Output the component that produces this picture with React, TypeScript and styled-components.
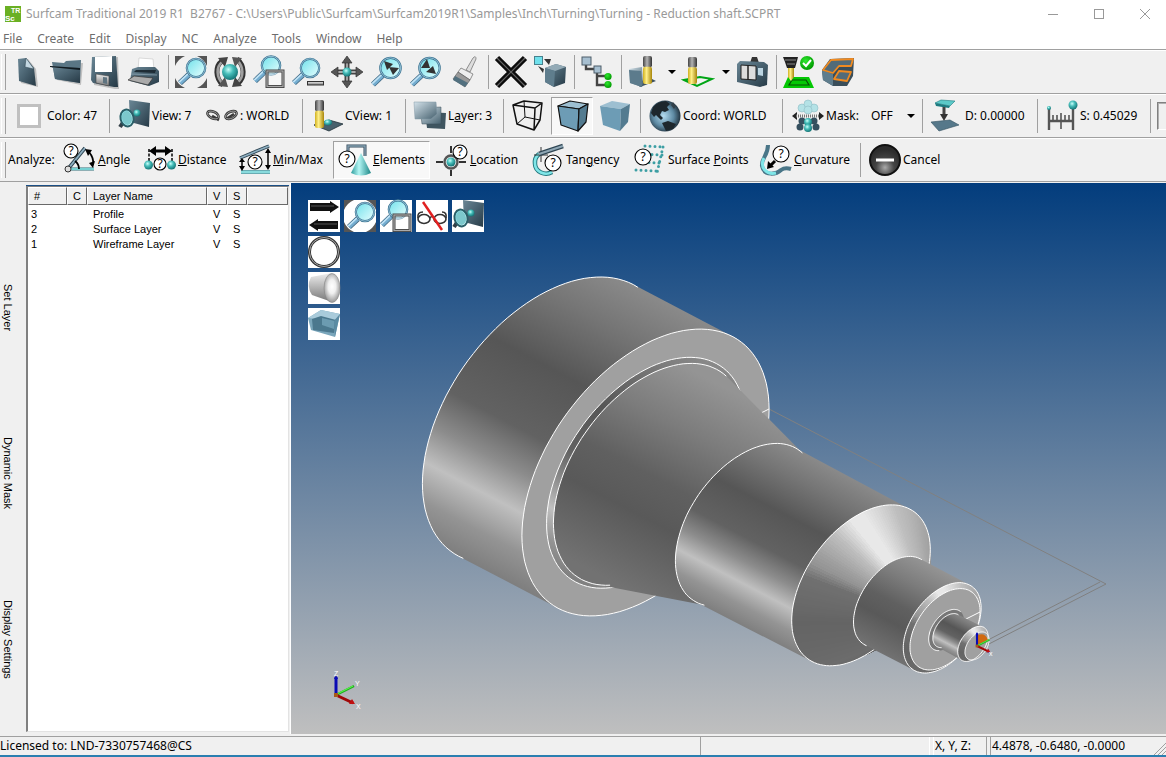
import React from "react";
import styled, { createGlobalStyle, css } from "styled-components";

const GlobalStyle = createGlobalStyle`
  * { box-sizing: border-box; }
  body { margin: 0; background: #f0f0f0; }
  button, select, input { font: inherit; color: inherit; }
`;

const Shell = styled.div`
  display: flex;
  flex-direction: column;
  min-height: 100vh;
  background: #f0f0f0;
  border-bottom: 2px solid #2a7fb0;
  font-family: "Noto Sans", sans-serif;
  font-size: 12px;
  line-height: 16px;
  color: #000;
`;

const TitleBar = styled.header`
  display: flex;
  align-items: center;
  height: 28px;
  padding-left: 5px;
  background: #fff;
`;

const Title = styled.h1`
  flex: 1;
  margin: 0 0 0 5px;
  font-size: 12px;
  font-weight: 400;
  color: #999;
  white-space: pre;
`;

const CaptionButton = styled.button`
  display: flex;
  align-items: center;
  justify-content: center;
  width: 46px;
  height: 28px;
  padding: 0 0 0 4px;
  border: 0;
  background: transparent;
`;

const MenuBar = styled.nav`
  display: flex;
  height: 21px;
  padding-left: 3px;
  gap: 15px;
  background: #fff;
`;

const MenuItem = styled.button`
  padding: 0;
  border: 0;
  background: transparent;
  color: #6d6d6d;
`;

const Toolbar = styled.div`
  display: flex;
  align-items: center;
  height: 44px;
  padding-left: 8px;
  border-top: 1px solid #a0a0a0;
  box-shadow: inset 0 1px 0 #fff;
  position: relative;
  overflow: hidden;
  &::before {
    content: "";
    position: absolute;
    left: 1px;
    top: 4px;
    width: 3px;
    height: 36px;
    border-right: 1px solid #a0a0a0;
    border-left: 1px solid #fff;
  }
`;

const Separator = styled.span<{ $wide?: boolean }>`
  flex: none;
  width: ${(p) => (p.$wide ? 8 : 6)}px;
  height: 34px;
  background: linear-gradient(#a0a0a0, #a0a0a0) center / 1px 100% no-repeat;
`;

const ToolButton = styled.button<{ $w?: number; $pressed?: boolean }>`
  flex: none;
  display: flex;
  align-items: center;
  gap: 2px;
  width: ${(p) => p.$w ?? 39}px;
  height: 38px;
  padding: 0 0 0 ${(p) => (p.$w ? 5 : 2)}px;
  border: 1px solid transparent;
  background: transparent;
  white-space: nowrap;
  ${(p) =>
    p.$pressed &&
    css`
      border-color: #a0a0a0 #fff #fff #a0a0a0;
      background: #f8f8f8;
    `}
`;

const Caret = styled.button`
  flex: none;
  width: 15px;
  height: 34px;
  padding: 0;
  border: 0;
  background: transparent;
  &::after {
    content: "";
    display: block;
    margin: 0 auto;
    width: 0;
    border: 4px solid transparent;
    border-top-color: #000;
    border-bottom: 0;
  }
`;

const Swatch = styled.span`
  width: 24px;
  height: 24px;
  margin: 0 4px 0 3px;
  border: 3px solid #c0c0c0;
  background: #fff;
`;

const MaskLabel = styled.label`
  flex: none;
  display: flex;
  align-items: center;
  gap: 2px;
  width: 84px;
  padding-left: 7px;
`;

const MaskSelect = styled.select`
  flex: none;
  width: 50px;
  height: 24px;
  padding: 0 0 0 2px;
  border: 0;
  appearance: none;
  background: transparent;
`;

const MaskGroup = styled.div`
  position: relative;
  display: flex;
  align-items: center;
  width: 134px;
  &::after {
    content: "";
    position: absolute;
    right: 4px;
    top: 14px;
    border: 4px solid transparent;
    border-top-color: #000;
    border-bottom: 0;
    pointer-events: none;
  }
`;

const Well = styled.span`
  flex: 1;
  align-self: center;
  height: 28px;
  margin-left: 4px;
  border: 1px solid #808080;
  border-right: 0;
  border-bottom-color: #fff;
  box-shadow: inset 1px 1px 0 #b0b0b0;
`;

const ToolbarCaption = styled.span`
  flex: none;
  width: 50px;
`;

const Main = styled.main`
  flex: 1;
  display: flex;
  min-height: 553px;
  padding-top: 1px;
  border-top: 1px solid #a0a0a0;
`;

const SidePanel = styled.aside`
  flex: none;
  display: flex;
  width: 291px;
  padding: 3px 1px 2px 0;
  border-right: 1px solid #fff;
`;

const TabStrip = styled.div`
  flex: none;
  display: flex;
  flex-direction: column;
  align-items: flex-start;
  width: 26px;
  padding: 39px 0 10px;
`;

const SideTab = styled.button`
  flex: 1;
  padding: 0;
  border: 0;
  background: transparent;
  writing-mode: vertical-rl;
  text-align: center;
  font: 11px/16px "Liberation Sans", sans-serif;
`;

const ListBox = styled.div`
  flex: 1;
  border: 1px solid #808080;
  border-left-width: 2px;
  border-right-color: #e3e3e3;
  border-bottom-color: #e3e3e3;
  box-shadow: 0 -1px 0 #1b4f86;
  background: #fff;
`;

const LayerTable = styled.table`
  width: 100%;
  table-layout: fixed;
  border-collapse: separate;
  border-spacing: 0;
  font: 11px/15px "Liberation Sans", sans-serif;
  th {
    height: 18px;
    padding: 0 5px;
    border: 1px solid;
    border-color: #fff #696969 #696969 #fff;
    background: #f0f0f0;
    font-weight: 400;
    text-align: left;
    line-height: 14px;
  }
  td {
    padding: 0 3px;
    height: 15px;
  }
  td:nth-child(3) { padding-left: 6px; }
  tbody tr:first-child td { padding-top: 2px; height: 17px; }
  td:nth-child(4), td:nth-child(5) { padding-left: 6px; }
`;

const Viewport = styled.section`
  position: relative;
  flex: 1;
  min-width: 0;
  overflow: hidden;
  background: linear-gradient(#033d7d, #bfbfbf);
`;

const Scene = styled.svg`
  display: block;
  width: 100%;
  height: 100%;
`;

const Overlay = styled.div`
  position: absolute;
  left: 17px;
  top: 17px;
  display: grid;
  grid-template-columns: repeat(5, 32px);
  grid-auto-rows: 32px;
  gap: 4px;
`;

const OverlayButton = styled.button<{ $first?: boolean }>`
  ${(p) => p.$first && "grid-column: 1;"}
  width: 32px;
  height: 32px;
  padding: 0;
  border: 0;
  background: #fff;
`;

const StatusBar = styled.footer`
  display: flex;
  height: 19px;
  margin-top: 2px;
  border-top: 1px solid #a0a0a0;
  line-height: 18px;
`;

const StatusCell = styled.span<{ $w?: number; $raised?: boolean }>`
  flex: ${(p) => (p.$w ? `0 0 ${p.$w}px` : "1")};
  padding-left: 1px;
  margin-right: 3px;
  border-right: 1px solid ${(p) => (p.$raised ? "#a0a0a0" : "#fff")};
  border-left: 1px solid ${(p) => (p.$raised ? "#fff" : "#a0a0a0")};
  &:first-child { padding-left: 0; margin-right: 0; border: 0; }
  &:last-child { margin-right: 0; border-right: 0; }
`;

const Coordinates = styled(StatusCell)`
  display: flex;
  justify-content: space-between;
`;

const Glyph = styled.svg`
  flex: none;
  display: block;
  width: 32px;
  height: 32px;
  overflow: visible;
`;

const SharedDefs = styled.svg`
  position: absolute;
  width: 0;
  height: 0;
`;

/* ---------- icons ---------- */

const Defs = () => (
  <SharedDefs aria-hidden="true">
    <defs>
      <linearGradient id="slate" x1="0" y1="0" x2="1" y2="1">
        <stop offset="0" stopColor="#6b8796" />
        <stop offset=".5" stopColor="#48616f" />
        <stop offset="1" stopColor="#263945" />
      </linearGradient>
      <linearGradient id="steel" x1="0" y1="0" x2="1" y2="1">
        <stop offset="0" stopColor="#d4e2ea" />
        <stop offset="1" stopColor="#45606e" />
      </linearGradient>
      <linearGradient id="lens" x1="0" y1="0" x2="1" y2="1">
        <stop offset="0" stopColor="#6fe0ea" />
        <stop offset="1" stopColor="#e8ffff" />
      </linearGradient>
      <linearGradient id="metal" x1="0" y1="0" x2="1" y2="0">
        <stop offset="0" stopColor="#444" />
        <stop offset=".45" stopColor="#b4b4b4" />
        <stop offset="1" stopColor="#333" />
      </linearGradient>
      <linearGradient id="brass" x1="0" y1="0" x2="1" y2="0">
        <stop offset="0" stopColor="#d0b020" />
        <stop offset=".4" stopColor="#fff08a" />
        <stop offset="1" stopColor="#a8860a" />
      </linearGradient>
      <linearGradient id="chrome" x1="0" y1="0" x2="0" y2="1">
        <stop offset="0" stopColor="#eee" />
        <stop offset="1" stopColor="#777" />
      </linearGradient>
      <linearGradient id="cone" x1="0" y1="0" x2="1" y2="0">
        <stop offset="0" stopColor="#2e9c9c" />
        <stop offset=".4" stopColor="#b4f6f4" />
        <stop offset="1" stopColor="#1b8686" />
      </linearGradient>
      <radialGradient id="teal" cx=".4" cy=".35" r=".65">
        <stop offset="0" stopColor="#c8fffa" />
        <stop offset=".45" stopColor="#46bdb9" />
        <stop offset="1" stopColor="#157577" />
      </radialGradient>
      <radialGradient id="green" cx=".4" cy=".35" r=".65">
        <stop offset="0" stopColor="#2fe82f" />
        <stop offset="1" stopColor="#009a00" />
      </radialGradient>
      <radialGradient id="globe" cx=".45" cy=".5" r=".55">
        <stop offset="0" stopColor="#b4dcf0" />
        <stop offset=".6" stopColor="#5f8ba4" />
        <stop offset="1" stopColor="#22333f" />
      </radialGradient>
      <radialGradient id="knob" cx=".5" cy=".75" r=".6">
        <stop offset="0" stopColor="#aaa" />
        <stop offset=".5" stopColor="#444" />
        <stop offset="1" stopColor="#2c2c2c" />
      </radialGradient>
      <radialGradient id="disc" cx=".5" cy=".45" r=".6">
        <stop offset="0" stopColor="#fff" />
        <stop offset=".4" stopColor="#f0f0f0" />
        <stop offset="1" stopColor="#888" />
      </radialGradient>
    </defs>
  </SharedDefs>
);

const Icon = ({ children }: { children: React.ReactNode }) => (
  <Glyph viewBox="0 0 32 32" aria-hidden="true">
    {children}
  </Glyph>
);

const Lens = ({ x, y, r, hx, hy }: { x: number; y: number; r: number; hx: number; hy: number }) => {
  const k = r / Math.hypot(hx - x, hy - y);
  const sx = x + (hx - x) * k;
  const sy = y + (hy - y) * k;
  return (
    <>
      <path d={`M${sx} ${sy}L${hx} ${hy}`} stroke="#3d647d" strokeWidth="5.6" />
      <path d={`M${sx} ${sy}L${hx} ${hy}`} stroke="#74add0" strokeWidth="4.2" />
      <path d={`M${sx - 0.8} ${sy - 0.8}L${hx - 0.8} ${hy - 0.8}`} stroke="#c2e4f6" strokeWidth="1.6" />
      <circle cx={x} cy={y} r={r - 0.8} fill="url(#lens)" stroke="#38708e" strokeWidth="2.2" />
      <circle cx={x} cy={y} r={r - 0.8} fill="none" stroke="#9cc9df" strokeWidth=".9" />
    </>
  );
};

const Help = ({ x, y, r = 7 }: { x: number; y: number; r?: number }) => (
  <>
    <circle cx={x} cy={y} r={r} fill="#fff" stroke="#000" strokeWidth="1.1" />
    <text x={x} y={y + 4.2} textAnchor="middle" fontSize="12" fontFamily="Noto Sans, sans-serif">
      ?
    </text>
  </>
);

const NewIcon = () => (
  <Icon>
    <path d="M9 4L17 3 25 13 27 31 10 27Z" fill="#0003" />
    <path d="M7 3L15 2 23 12 25 30 8 25Z" fill="url(#slate)" />
    <path d="M15 2L23 13 14 11Z" fill="#c5d8e2" stroke="#2d424e" strokeWidth=".5" />
  </Icon>
);
const OpenIcon = () => (
  <Icon>
    <path d="M6 8L33 7 31 29 7 24Z" fill="#0003" />
    <path d="M2 6L14 7 16 5 31 4 30 27 5 23Z" fill="#5a7685" />
    <path d="M0 10L30 12 30 27 5 23 3 12Z" fill="url(#slate)" />
    <path d="M0 10L30 12 30 14 0 11Z" fill="#111b21" />
  </Icon>
);
const SaveIcon = () => (
  <Icon>
    <path d="M5 2L29 1 30 33 26 33 5 29Z" fill="#0003" />
    <path d="M3 1L27 0 29 31 25 31 4 27 2 24Z" fill="url(#slate)" />
    <path d="M6 1L23 0 23 16 6 16Z" fill="#fff" />
    <path d="M7 18L20 20 20 30 7 27Z" fill="url(#chrome)" stroke="#444" strokeWidth=".6" />
    <path d="M14 21L18 21.500 18 28 14 27Z" fill="#5f7480" />
  </Icon>
);
const PrintIcon = () => (
  <Icon>
    <path d="M11 2L25 3 26 14 10 14Z" fill="#fff" stroke="#bbb" strokeWidth=".5" />
    <path d="M4 13L10 11 27 11 31 15 31 26 21 30 2 25Z" fill="url(#slate)" />
    <path d="M8 14L28 14 27 17 6 16Z" fill="#1e2c35" />
    <path d="M0 24L6 20 25 22 20 29Z" fill="#aaa" stroke="#333" strokeWidth=".7" />
    <path d="M3 18L29 19" stroke="#8aa2b0" strokeWidth=".8" />
  </Icon>
);
const FitIcon = () => (
  <Icon>
    <path d="M0 0H10Q3 3 0 10ZM32 0H22Q29 3 32 10ZM0 32V22Q3 29 10 32ZM32 32H22Q29 29 32 22Z" fill="#555" />
    <Lens x={21} y={12} r={10} hx={5} hy={27} />
  </Icon>
);
const RotateIcon = () => (
  <Icon>
    <g fill="none" stroke="#333" strokeWidth="5">
      <path d="M9 29C1 22 1 10 8 5" />
      <path d="M23 3C31 10 31 22 24 27" />
    </g>
    <g fill="none" stroke="#a0a0a0" strokeWidth="2.600">
      <path d="M9 28C2 21 2 11 8 6" />
      <path d="M23 4C30 11 30 21 24 26" />
    </g>
    <path d="M4 2L14 1 11 11ZM28 30L18 31 21 21Z" fill="#444" />
    <path d="M28 2L18 1 21 11ZM4 30L14 31 11 21Z" fill="#555" />
    <circle cx="16" cy="16" r="8" fill="url(#teal)" />
  </Icon>
);
const ZoomWindowIcon = () => (
  <Icon>
    <Lens x={18} y={9.500} r={10} hx={2} hy={25} />
    <rect x="14" y="15" width="16" height="15.500" fill="#fff6" stroke="#444" strokeWidth="3" />
    <rect x="14" y="15" width="16" height="15.500" fill="none" stroke="#aaa" strokeWidth="1.200" />
  </Icon>
);
const ZoomOutIcon = () => (
  <Icon>
    <Lens x={18} y={12} r={10} hx={2} hy={27} />
    <rect x="15.500" y="25.500" width="16" height="3.500" fill="url(#chrome)" stroke="#333" />
  </Icon>
);
const PanIcon = () => (
  <Icon>
    <path d="M16 3V29M3 16H29" stroke="#444" strokeWidth="5" />
    <path d="M16 3V29M3 16H29" stroke="#aaa" strokeWidth="1.800" />
    <path d="M16 0L21 7H11ZM16 32L21 25H11ZM0 16L7 11V21ZM32 16L25 11V21Z" fill="#555" stroke="#333" strokeWidth=".7" />
    <circle cx="16" cy="16" r="4.500" fill="url(#teal)" />
  </Icon>
);
const PrevIcon = () => (
  <Icon>
    <Lens x={20.500} y={12} r={11} hx={3} hy={28.500} />
    <path d="M14 5L23 8 17 14ZM19 11L29 12 23 19Z" fill="#333" />
  </Icon>
);
const NextIcon = () => (
  <Icon>
    <Lens x={20.500} y={12} r={11} hx={3} hy={28.500} />
    <path d="M18 3L21 12 12 12ZM24 10L27 18 17 16Z" fill="#333" />
  </Icon>
);
const BrushIcon = () => (
  <Icon>
    <path d="M25 2Q28-1 28 3L22 16 18 14Z" fill="#ddd" stroke="#777" strokeWidth=".8" />
    <path d="M13 12L25 18 22 24 10 16Z" fill="#eee" stroke="#777" strokeWidth=".8" />
    <path d="M10 16L22 24 17 31 5 23Z" fill="#9a9a9a" stroke="#555" strokeWidth=".6" />
    <path d="M7 20L20 27 17 31 5 24Z" fill="#52707f" />
  </Icon>
);
const DeleteIcon = () => (
  <Icon>
    <path d="M2 2L30 30M30 2L2 30" stroke="#0c0c0c" strokeWidth="6" />
    <path d="M2 2L30 30M30 2L2 30" stroke="#666" strokeWidth="1.200" />
  </Icon>
);
const TransformIcon = () => (
  <Icon>
    <path d="M11 12L22 8 32 11 31 27 20 31 11 26Z" fill="url(#slate)" />
    <path d="M11 12L22 8 32 11 21 15Z" fill="#93aab6" />
    <path d="M11 12L21 15 20 31 11 26Z" fill="#5f7d8d" />
    <rect x=".5" y=".5" width="8" height="8" fill="#6fe0ec" stroke="#47818d" />
    <path d="M10 3L17 3 15 9ZM4 10L10 13 9 17Z" fill="#333" />
  </Icon>
);
const TreeIcon = () => (
  <Icon>
    <path d="M5 8V13H14M16 16V29H26M16 20H26" fill="none" stroke="#444" strokeWidth="2.400" />
    <rect x="1" y="1" width="9" height="8" fill="#a7bfd0" stroke="#4c5d69" />
    <rect x="13" y="10" width="7" height="7" fill="#a7bfd0" stroke="#4c5d69" />
    <circle cx="27" cy="20.500" r="3.600" fill="url(#green)" />
    <circle cx="27" cy="28.500" r="3.600" fill="url(#green)" />
  </Icon>
);
const Tool = ({ x, top = 0, h = 28 }: { x: number; top?: number; h?: number }) => (
  <>
    <rect x={x} y={top} width="9" height={h * 0.4} rx="2" fill="url(#metal)" />
    <rect x={x} y={top + h * 0.38} width="9" height={h * 0.62} rx="2" fill="url(#brass)" />
  </>
);
const MillIcon = () => (
  <Icon>
    <path d="M12 31L28 25 22 22 8 27Z" fill="#3d515e" />
    <path d="M1 13L14 11 15 28 14 31 2 27Z" fill="url(#steel)" />
    <path d="M1 14L13 15 14 31 2 27Z" fill="#5c7b8c" />
    <Tool x={15} />
  </Icon>
);
const PathIcon = () => (
  <Icon>
    <path d="M2 24L15 30 30 23 18 21Z" fill="#f4f4f4" stroke="#00a515" strokeWidth="2" />
    <Tool x={6} top={1} h={27} />
  </Icon>
);
const MachineIcon = () => (
  <Icon>
    <path d="M16 1h5l2 6h-9z" fill="#333" />
    <path d="M1 8L4 5 28 6 32 9 31 29 24 31 1 26Z" fill="url(#slate)" />
    <path d="M5 9L20 10 20 24 5 23Z" fill="#ddd" stroke="#222" />
    <path d="M12 9V24" stroke="#222" strokeWidth="1.500" />
    <path d="M22 12L27 12 27 20 22 19Z" fill="#bcd5e2" />
  </Icon>
);
const VerifyIcon = () => (
  <Icon>
    <path d="M0 1H15L14 5 12 12H4L2 6Z" fill="#222" />
    <path d="M2 4H13M4 8H12" stroke="#888" />
    <path d="M5 21H26L31 32H0Z" fill="#04c804" />
    <path d="M9 24H23L26 29H6Z" fill="none" stroke="#064f06" strokeWidth="1.200" />
    <path d="M5 12H11V21L8 25 5 21Z" fill="url(#brass)" />
    <circle cx="24" cy="7" r="7" fill="url(#green)" />
    <path d="M20 7L23 10 28 4" fill="none" stroke="#fff" strokeWidth="2" />
  </Icon>
);
const StockIcon = () => (
  <Icon>
    <path d="M0 14L8 3 32 2 31 20 25 30 11 30 1 24Z" fill="#3a4e5a" />
    <path d="M0 14L11 18 11 30 1 24Z" fill="#5f7d8d" />
    <path d="M1 14L9 4 31 3 29 10 17 10 11 17Z" fill="#526b79" stroke="#f08a20" strokeWidth="1.800" strokeLinejoin="round" />
    <path d="M12 23L17 15 29 16 25 25Z" fill="#526b79" stroke="#f08a20" strokeWidth="1.800" strokeLinejoin="round" />
  </Icon>
);
const ViewIcon = () => (
  <Icon>
    <path d="M11 0L32 3 31 27 12 22Z" fill="url(#slate)" />
    <circle cx="19" cy="13" r="3.500" fill="url(#teal)" />
    <path d="M6 21L2 27" stroke="#333f47" strokeWidth="4" />
    <ellipse cx="9" cy="18" rx="6.500" ry="8.500" transform="rotate(-12 9 18)" fill="url(#lens)" stroke="#2a5f68" strokeWidth="2" />
    <ellipse cx="9" cy="18" rx="5" ry="7" transform="rotate(-12 9 18)" fill="#7cc8cc" />
  </Icon>
);
const LinkIcon = () => (
  <Icon>
    <g fill="none" stroke="#3a3a3a" strokeWidth="2.600">
      <ellipse cx="7" cy="15" rx="6" ry="3.300" transform="rotate(25 7 15)" />
      <ellipse cx="25" cy="15" rx="6" ry="3.300" transform="rotate(-25 25 15)" />
      <path d="M6 16L13 20M20 19L28 14" />
    </g>
    <g fill="none" stroke="#aaa" strokeWidth=".8">
      <ellipse cx="7" cy="15" rx="6" ry="3.300" transform="rotate(25 7 15)" />
      <ellipse cx="25" cy="15" rx="6" ry="3.300" transform="rotate(-25 25 15)" />
    </g>
  </Icon>
);
const CViewIcon = () => (
  <Icon>
    <path d="M3 25L18 20 32 24 18 31Z" fill="#48606c" stroke="#22313a" strokeWidth=".8" />
    <ellipse cx="17" cy="22.500" rx="4" ry="3" fill="url(#teal)" />
    <Tool x={4} h={28} />
  </Icon>
);
const LayerIcon = () => (
  <Icon>
    <path d="M11 12L32 13 31 29 13 28Z" fill="#3f5560" />
    <path d="M6 8L27 7 27 24 8 24Z" fill="url(#steel)" stroke="#3b4e59" strokeWidth=".5" />
    <path d="M0 2L22 2 23 14 17 19 1 19Z" fill="url(#steel)" stroke="#8399a6" strokeWidth=".5" />
  </Icon>
);
const WireCubeIcon = () => (
  <Icon>
    <g fill="none" stroke="#111" strokeWidth="1.500" strokeLinejoin="round">
      <path d="M1 5L12 1 30 3 23 8ZM1 5L5 24 22 30 28 20 30 3M23 8L22 30" />
      <path d="M12 1L13 17 28 20M13 17L5 24" strokeWidth="1" />
    </g>
  </Icon>
);
const Cube = ({ edge }: { edge?: string }) => (
  <Icon>
    <g stroke={edge ?? "none"} strokeWidth="1.200" strokeLinejoin="round">
      <path d="M1 6L13 1 31 4 22 9Z" fill="#9dbfd1" />
      <path d="M1 6L22 9 21 31 4 25Z" fill="#6d9cb5" />
      <path d="M22 9L31 4 29 22 21 31Z" fill="#537b90" />
    </g>
  </Icon>
);
const GlobeIcon = () => (
  <Icon>
    <circle cx="16" cy="16" r="15.500" fill="url(#globe)" />
    <path d="M4 7Q9 1 17 1L21 4 18 7 20 10 16 12 13 11 11 15 14 18 12 20 7 15 5 17 2 13Z" fill="#1d272d" />
    <path d="M13 23L19 21 27 24 24 29 17 31 15 27Z" fill="#1d272d" />
    <path d="M24 2L27 6 25 9 22 5Z" fill="#324049" />
  </Icon>
);
const MaskIcon = () => (
  <Icon>
    <g fill="#b4e2e6" stroke="#8fbcc4" strokeWidth=".6">
      <circle cx="10" cy="8" r="4" />
      <circle cx="22" cy="8" r="4" />
      <circle cx="16" cy="4" r="4" />
      <circle cx="16" cy="10" r="4" />
    </g>
    <path d="M0 16L5 12V20ZM32 16L27 12V20Z" fill="#222" />
    <path d="M4 16H28" stroke="#777" strokeDasharray="1 1" strokeWidth="3" />
    <g fill="#35505f">
      <circle cx="10" cy="21" r="3.500" />
      <circle cx="22" cy="21" r="3.500" />
      <circle cx="8" cy="27" r="3.500" />
      <circle cx="24" cy="27" r="3.500" />
    </g>
    <circle cx="16" cy="22" r="4" fill="url(#teal)" />
    <circle cx="16" cy="28" r="4" fill="url(#teal)" />
  </Icon>
);
const DepthIcon = () => (
  <Icon>
    <path d="M4 3L10 0 24 1 19 6Z" fill="#5cc9c8" stroke="#1d7b80" strokeWidth=".6" />
    <path d="M4 3L19 6 18 8 5 6Z" fill="#1d7b80" />
    <path d="M13 7V15" stroke="#444" strokeWidth="3" />
    <path d="M9 14H17L13 21Z" fill="#333" />
    <path d="M0 22L19 20 28 25 8 31Z" fill="#56788a" stroke="#33505f" strokeWidth=".6" />
  </Icon>
);
const ScaleIcon = () => (
  <Icon>
    <path d="M3 8V30M27 8V30M3 21H27" stroke="#555" strokeWidth="2.400" />
    <path d="M7 15V21M11 15V21M19 15V21M23 15V21M15 13V29" stroke="#555" strokeWidth="1.600" />
    <circle cx="3" cy="8" r="2" fill="url(#teal)" />
    <circle cx="27" cy="5" r="4.500" fill="url(#teal)" />
  </Icon>
);
const AngleIcon = () => (
  <Icon>
    <path d="M4 25H30" stroke="#2e6f78" strokeWidth="3" />
    <path d="M4 25H30" stroke="#8ff0f0" strokeWidth="1.500" />
    <path d="M4 25L21 4" stroke="#2f4654" strokeWidth="3.600" />
    <path d="M4 25L21 4" stroke="#8fb0c2" strokeWidth="1.800" />
    <path d="M11 17Q15 20 15 25M25 8Q30 14 29 20" fill="none" stroke="#000" strokeWidth="1.800" />
    <path d="M21 5L28 6 24 12ZM25 19L31 17 29 24Z" fill="#000" />
    <Help x={7} y={7} />
    <circle cx="4" cy="25" r="3" fill="#ddd" stroke="#333" />
  </Icon>
);
const DistanceIcon = () => (
  <Icon>
    <path d="M5 5V17M28 5V17" stroke="#000" strokeWidth="1.500" strokeDasharray="3 1.500" />
    <path d="M10 7H23" stroke="#000" strokeWidth="3" />
    <path d="M5 7L12 2V12ZM28 7L21 2V12Z" fill="#000" />
    <Help x={16} y={20} r={6} />
    <circle cx="4.500" cy="21" r="4.500" fill="url(#teal)" />
    <circle cx="27.500" cy="21" r="4.500" fill="url(#teal)" />
  </Icon>
);
const MinMaxIcon = () => (
  <Icon>
    <path d="M1 14L30 2" stroke="#2f4654" strokeWidth="3.400" />
    <path d="M1 14L30 2" stroke="#8fb0c2" strokeWidth="1.600" />
    <path d="M2 28H31" stroke="#2e8f98" strokeWidth="3.400" />
    <path d="M2 28H31" stroke="#a8f4f4" strokeWidth="1.500" />
    <path d="M3 17V24M29 6V23" stroke="#000" strokeWidth="1.500" />
    <path d="M3 14L6 18H0ZM3 27L6 22H0ZM29 4L32 9H26ZM29 26L32 21H26Z" fill="#000" />
    <Help x={16} y={18} />
  </Icon>
);
const ElementsIcon = () => (
  <Icon>
    <path d="M9 8V2H26V12" fill="none" stroke="#33495a" strokeWidth="3" />
    <path d="M9 8V2H26V12" fill="none" stroke="#86a2b3" strokeWidth="1.400" />
    <path d="M22 9L32 29Q22 34 12 29Z" fill="url(#cone)" />
    <Help x={8} y={15} r={8} />
  </Icon>
);
const LocationIcon = () => (
  <Icon>
    <path d="M15 2V9M15 26V32M0 18H7M23 18H30" stroke="#333" strokeWidth="2" />
    <circle cx="15" cy="18" r="6.500" fill="none" stroke="#555" strokeWidth="2.400" />
    <circle cx="15" cy="18" r="4.500" fill="url(#teal)" />
    <Help x={24} y={8} r={7} />
  </Icon>
);
const TangencyIcon = () => (
  <Icon>
    <path d="M7 10A11 11 0 0 0 3 20A11 10 0 0 0 20 28" fill="none" stroke="#23777e" strokeWidth="4.500" />
    <path d="M7 10A11 11 0 0 0 3 20A11 10 0 0 0 20 28" fill="none" stroke="#7fe6e8" strokeWidth="2.600" />
    <path d="M9 3V18M2 11H16" stroke="#333" />
    <path d="M7 10L31 2" stroke="#2f4654" strokeWidth="4.500" />
    <path d="M7 10L31 2" stroke="#8fa7b5" strokeWidth="2" />
    <Help x={21} y={19} r={8} />
  </Icon>
);
const SurfaceIcon = () => (
  <Icon>
    {[0, 1, 2, 3].map((row) => (
      <path
        key={row}
        d={`M${11 - row * 3} ${2 + row * 8}L${30 - row * 2} ${3 + row * 8}`}
        stroke="#3d9fa4"
        strokeWidth="3"
        strokeLinecap="round"
        strokeDasharray="0 5"
      />
    ))}
    <path d="M29 3L23 29" stroke="#3d9fa4" strokeWidth="3" strokeLinecap="round" strokeDasharray="0 5" />
    <Help x={9} y={13} r={8} />
  </Icon>
);
const CurvatureIcon = () => (
  <Icon>
    <path d="M8 1C8 12 1 14 2 22C4 33 17 30 21 26Q25 23 31 25" fill="none" stroke="#4a7688" strokeWidth="4" />
    <path d="M4 14C-1 24 7 31 16 29" fill="none" stroke="#7fe6e8" strokeWidth="3" />
    <path d="M15 17L10 22" stroke="#000" strokeWidth="3" />
    <path d="M7 25L8 17 14 23Z" fill="#000" />
    <Help x={21} y={10} r={8} />
  </Icon>
);
const CancelIcon = () => (
  <Icon>
    <circle cx="16" cy="16" r="15" fill="url(#knob)" stroke="#111" strokeWidth="2" />
    <rect x="7" y="14.500" width="18" height="3" fill="#fff" />
  </Icon>
);
const SwapIcon = () => (
  <Icon>
    <path d="M2 3H22V1L31 7 22 13V11H2ZM30 21H10V19L1 25 10 31V29H30Z" fill="#111" />
    <path d="M3 6H26M29 24H6" stroke="#555" />
  </Icon>
);
const GlassesIcon = () => (
  <Icon>
    <g fill="none" stroke="#333" strokeWidth="1.600">
      <ellipse cx="8" cy="19" rx="6" ry="4.500" />
      <ellipse cx="24" cy="19" rx="6" ry="4.500" />
      <path d="M2 18Q1 12 7 12M30 18Q31 12 26 12M14 18Q16 15 18 18" />
    </g>
    <path d="M7 2L26 30" stroke="#e02020" strokeWidth="2.500" />
  </Icon>
);
const CircleIcon = () => (
  <Icon>
    <circle cx="16" cy="16" r="14.500" fill="none" stroke="#333" strokeWidth="3" />
    <circle cx="16" cy="16" r="14.500" fill="none" stroke="#aaa" />
  </Icon>
);
const CylinderIcon = () => (
  <Icon>
    <path d="M3 5L24 1 24 30 4 23Q-2 14 3 5Z" fill="url(#chrome)" />
    <ellipse cx="24" cy="16" rx="8" ry="14.500" fill="url(#disc)" stroke="#888" strokeWidth=".6" />
  </Icon>
);
const SolidIcon = () => (
  <Icon>
    <path d="M0 10L13 2 32 6 27 29 3 22Z" fill="#7aa6bb" />
    <path d="M0 10L13 2 32 6 26 13Z" fill="#a9cbdb" />
    <path d="M4 11L13 8 28 12 26 25 5 22Z" fill="#4b788e" />
    <path d="M14 10L27 13 26 21 14 17Z" fill="#6c9bb1" />
    <path d="M26 13L32 6 27 29Z" fill="#5b8ba3" />
  </Icon>
);

/* ---------- shaft drawing ---------- */

type Ring = { x: number; h: number };
type Pt = [number, number];

const axisY = (x: number) => 472.5 + (x - 645.5) * 0.5235;

const at = (r: Ring, deg: number): Pt => {
  const a = (deg * Math.PI) / 180;
  return [
    r.x + 0.861 * r.h * Math.cos(a),
    axisY(r.x) - 0.441 * r.h * Math.cos(a) - 0.897 * r.h * Math.sin(a),
  ];
};

const toPath = (pts: Pt[]) => "M" + pts.map(([x, y]) => `${x.toFixed(1)} ${y.toFixed(1)}`).join("L");

const arc = (r: Ring, from = 0, to = 360) => {
  const pts: Pt[] = [];
  for (let d = from; d <= to; d += 3) pts.push(at(r, d));
  return toPath(pts);
};

const cross = (o: Pt, a: Pt, b: Pt) => (a[0] - o[0]) * (b[1] - o[1]) - (a[1] - o[1]) * (b[0] - o[0]);

const hull = (a: Ring, b: Ring) => {
  const pts: Pt[] = [];
  for (let d = 0; d < 360; d += 3) pts.push(at(a, d), at(b, d));
  pts.sort((p, q) => p[0] - q[0] || p[1] - q[1]);
  const half = (list: Pt[]) => {
    const out: Pt[] = [];
    for (const p of list) {
      while (out.length > 1 && cross(out[out.length - 2], out[out.length - 1], p) <= 0) out.pop();
      out.push(p);
    }
    out.pop();
    return out;
  };
  return toPath([...half(pts), ...half([...pts].reverse())]) + "Z";
};

const coneShade: [number, number][] = [
  [0, 155], [30, 168], [60, 190], [88, 232], [98, 232], [112, 190], [128, 160], [136, 148], [146, 112], [180, 100], [240, 108], [290, 98], [330, 120], [360, 155],
];

const shadeAt = (deg: number) => {
  const i = coneShade.findIndex(([d]) => d >= deg);
  if (i <= 0) return coneShade[0][1];
  const [d0, v0] = coneShade[i - 1];
  const [d1, v1] = coneShade[i];
  return Math.round(v0 + ((v1 - v0) * (deg - d0)) / (d1 - d0));
};

const Chamfer = ({ from, to }: { from: Ring; to: Ring }) => (
  <g shapeRendering="crispEdges">
    {Array.from({ length: 180 }, (_, i) => {
      const d = i * 2;
      const v = shadeAt(d);
      const c = `rgb(${v},${v},${v})`;
      return (
        <path
          key={d}
          d={toPath([at(from, d), at(from, d + 3), at(to, d + 3), at(to, d)]) + "Z"}
          fill={c}
        />
      );
    })}
  </g>
);

const turned: [number, string][] = [
  [0, "#8a8a8a"], [0.15, "#757575"], [0.35, "#565656"], [0.56, "#626262"], [0.68, "#8c8c8c"], [0.79, "#c0c0c0"], [0.9, "#949494"], [1, "#7e7e7e"],
];
const tapered: [number, string][] = [
  [0, "#949494"], [0.25, "#7c7c7c"], [0.5, "#606060"], [0.68, "#595959"], [1, "#727272"],
];

const Shading = ({ id, ring, stops }: { id: string; ring: Ring; stops: [number, string][] }) => {
  const r = ring.h * 1.122;
  const y = axisY(ring.x);
  return (
    <linearGradient
      id={id}
      gradientUnits="userSpaceOnUse"
      x1={ring.x + 0.464 * r}
      y1={y - 0.886 * r}
      x2={ring.x - 0.464 * r}
      y2={y + 0.886 * r}
    >
      {stops.map(([o, c]) => (
        <stop key={o} offset={o} stopColor={c} />
      ))}
    </linearGradient>
  );
};

const flangeBack = { x: 546, h: 143.5 };
const flange = { x: 645.5, h: 143.5 };
const groove = { x: 646, h: 115.5 };
const taperStart = { x: 649, h: 111 };
const bodyStart = { x: 745.6, h: 81.5 };
const bodyEnd = { x: 861, h: 80.5 };
const neckStart = { x: 892.7, h: 45.5 };
const neckEnd = { x: 942.2, h: 45.2 };
const neckFace = { x: 945, h: 40.7 };
const reliefOuter = { x: 946.4, h: 20.6 };
const reliefInner = { x: 947.5, h: 17 };
const tipStart = { x: 972.9, h: 17.6 };
const tipFace = { x: 977, h: 14 };

const Triad = ({ x, y, s = 1 }: { x: number; y: number; s?: number }) => (
  <g transform={`translate(${x} ${y}) scale(${s})`} strokeLinecap="butt">
    <path d="M0 0V-18" stroke="#0a0ab4" strokeWidth="3" />
    <path d="M0 0L18-9" stroke="#1fae1f" strokeWidth="2.500" />
    <path d="M1-1L17-9" stroke="#5fff4f" />
    <path d="M0 0L17 8" stroke="#a00808" strokeWidth="3" />
    <path d="M-2-16L0-20 2-16ZM14 9L18 9 16 5Z" fill="#0a0ab4" />
    <path d="M13 9L19 9 16 4Z" fill="#c01010" />
    <rect x="-2" y="-2" width="4" height="4" fill="#a85a18" />
  </g>
);

const AxisLabel = ({ x, y, children }: { x: number; y: number; children: string }) => (
  <text x={x} y={y} fill="#fff" fontSize="7" fontFamily="Liberation Sans, sans-serif">
    {children}
  </text>
);

const ShaftScene = () => (
  <Scene viewBox="291 183 875 551" preserveAspectRatio="xMinYMin meet" role="img" aria-label="Reduction shaft">
    <defs>
      <Shading id="g-flange" ring={flange} stops={turned} />
      <Shading id="g-groove" ring={groove} stops={turned} />
      <Shading id="g-taper" ring={{ x: 690, h: 100 }} stops={tapered} />
      <Shading id="g-body" ring={bodyStart} stops={turned} />
      <Shading id="g-neck" ring={neckStart} stops={tapered} />
      <Shading id="g-tip" ring={tipStart} stops={turned} />
    </defs>
    <g fill="none" stroke="#808080">
      <path d="M769 409L1106 584 985 646" />
      <path d="M1100 582L988 640" />
    </g>
    <path d={hull(flangeBack, flange)} fill="url(#g-flange)" />
    <path d={arc(flange)} fill="#a0a0a0" />
    <path d={arc(groove)} fill="url(#g-groove)" />
    <g fill="none" stroke="#fff">
      <path d={arc(flangeBack, 42, 228)} />
      <path d={arc(flange)} />
      <path d={arc(groove)} />
      <path d="M761 413L769 409" />
    </g>
    <path d={hull(taperStart, bodyStart)} fill="url(#g-taper)" />
    <path d={arc(taperStart, 36, 246)} fill="none" stroke="#fff" />
    <path d={hull(bodyStart, bodyEnd)} fill="url(#g-body)" />
    <path d={arc(bodyStart, 36, 234)} fill="none" stroke="#fff" />
    <path d={arc(bodyEnd)} fill="#a8a8a8" />
    <Chamfer from={bodyEnd} to={neckStart} />
    <path d={arc(bodyEnd)} fill="none" stroke="#fff" />
    <path d={hull(neckStart, neckEnd)} fill="url(#g-neck)" />
    <path d={arc(neckStart, 42, 228)} fill="none" stroke="#fff" />
    <Chamfer from={neckEnd} to={neckFace} />
    <path d={arc(neckFace)} fill="#a0a0a0" />
    <path d={arc(reliefOuter)} fill="#777" />
    <g fill="none" stroke="#fff">
      <path d={arc(neckEnd)} />
      <path d={arc(neckFace)} />
      <path d={arc(reliefOuter, 36, 246)} />
      <path d="M964 620L980 612" />
    </g>
    <path d={hull(reliefInner, tipStart)} fill="url(#g-tip)" />
    <path d={arc(reliefInner, 42, 246)} fill="none" stroke="#fff" />
    <Chamfer from={tipStart} to={tipFace} />
    <path d={arc(tipFace)} fill="#a0a0a0" />
    <g fill="none" stroke="#fff">
      <path d={arc(tipStart)} />
      <path d={arc(tipFace)} />
    </g>
    <path d="M978 645V635Q985 632 988 640Z" fill="#d06a10" />
    <Triad x={977} y={646} s={0.7} />
    <AxisLabel x={989} y={656}>x</AxisLabel>
    <Triad x={336} y={695} />
    <AxisLabel x={334} y={676}>Z</AxisLabel>
    <AxisLabel x={355} y={686}>Y</AxisLabel>
    <AxisLabel x={356} y={709}>X</AxisLabel>
  </Scene>
);

/* ---------- page ---------- */

const menus = ["File", "Create", "Edit", "Display", "NC", "Analyze", "Tools", "Window", "Help"];

const fileTools: [string, React.FC][] = [["New", NewIcon], ["Open", OpenIcon], ["Save", SaveIcon], ["Print", PrintIcon]];
const viewTools: [string, React.FC][] = [
  ["Fit", FitIcon], ["Rotate", RotateIcon], ["Zoom window", ZoomWindowIcon], ["Zoom out", ZoomOutIcon],
  ["Pan", PanIcon], ["Previous view", PrevIcon], ["Next view", NextIcon], ["Repaint", BrushIcon],
];

const analyzeTools: { key: string; rest: string; pre?: string; icon: React.FC; w: number; pressed?: boolean }[] = [
  { key: "A", rest: "ngle", icon: AngleIcon, w: 80 },
  { key: "D", rest: "istance", icon: DistanceIcon, w: 95 },
  { key: "M", rest: "in/Max", icon: MinMaxIcon, w: 100 },
  { key: "E", rest: "lements", icon: ElementsIcon, w: 97, pressed: true },
  { key: "L", rest: "ocation", icon: LocationIcon, w: 96 },
  { pre: "Tan", key: "g", rest: "ency", icon: TangencyIcon, w: 102 },
  { pre: "Surface ", key: "P", rest: "oints", icon: SurfaceIcon, w: 126 },
  { key: "C", rest: "urvature", icon: CurvatureIcon, w: 103 },
];

const layers = [
  [3, "Profile"],
  [2, "Surface Layer"],
  [1, "Wireframe Layer"],
];

const IconTools = ({ items }: { items: [string, React.FC][] }) => (
  <>
    {items.map(([name, I]) => (
      <ToolButton key={name} aria-label={name}>
        <I />
      </ToolButton>
    ))}
  </>
);

export default function App() {
  return (
    <Shell>
      <GlobalStyle />
      <Defs />
      <TitleBar>
        <svg width="16" height="16" viewBox="0 0 16 16" aria-hidden="true">
          <rect width="16" height="16" fill="#6ab023" />
          <text x="6" y="7" fontSize="7" fontWeight="700" fill="#fff" fontFamily="Liberation Sans, sans-serif">TR</text>
          <text x="0" y="15" fontSize="8" fontWeight="700" fill="#fff" fontFamily="Liberation Sans, sans-serif">Sc</text>
        </svg>
        <Title>
          {"Surfcam Traditional 2019 R1  B2767 - C:\\Users\\Public\\Surfcam\\Surfcam2019R1\\Samples\\Inch\\Turning\\Turning - Reduction shaft.SCPRT"}
        </Title>
        <CaptionButton aria-label="Minimize">
          <svg width="11" height="11"><path d="M0 5.500H10" stroke="#999" /></svg>
        </CaptionButton>
        <CaptionButton aria-label="Maximize">
          <svg width="11" height="11"><rect x=".5" y=".5" width="9" height="9" fill="none" stroke="#999" /></svg>
        </CaptionButton>
        <CaptionButton aria-label="Close">
          <svg width="11" height="11"><path d="M0 0L10 10M10 0L0 10" stroke="#999" /></svg>
        </CaptionButton>
      </TitleBar>
      <MenuBar>
        {menus.map((m) => (
          <MenuItem key={m}>{m}</MenuItem>
        ))}
      </MenuBar>

      <Toolbar>
        <IconTools items={fileTools} />
        <Separator $wide />
        <IconTools items={viewTools} />
        <Separator $wide />
        <IconTools items={[["Delete", DeleteIcon], ["Transform", TransformIcon]]} />
        <Separator $wide />
        <IconTools items={[["Feature tree", TreeIcon]]} />
        <Separator $wide />
        <IconTools items={[["Mill", MillIcon]]} />
        <Caret aria-label="Mill options" />
        <IconTools items={[["Tool path", PathIcon]]} />
        <Caret aria-label="Tool path options" />
        <IconTools items={[["Machine", MachineIcon]]} />
        <Separator $wide />
        <IconTools items={[["Verify", VerifyIcon], ["Stock", StockIcon]]} />
      </Toolbar>

      <Toolbar>
        <ToolButton $w={98}>
          <Swatch />Color: 47
        </ToolButton>
        <Separator />
        <ToolButton $w={88}><ViewIcon />View: 7</ToolButton>
        <ToolButton $w={99}><LinkIcon />: WORLD</ToolButton>
        <Separator />
        <ToolButton $w={97}><CViewIcon />CView: 1</ToolButton>
        <Separator />
        <ToolButton $w={92}>
          <LayerIcon /><span>L<u>a</u>yer: 3</span>
        </ToolButton>
        <Separator />
        <ToolButton $w={45} aria-label="Wireframe"><WireCubeIcon /></ToolButton>
        <ToolButton $w={42} $pressed aria-label="Shaded with edges"><Cube edge="#111" /></ToolButton>
        <ToolButton $w={44} aria-label="Shaded"><Cube /></ToolButton>
        <Separator />
        <ToolButton $w={136}><GlobeIcon />Coord: WORLD</ToolButton>
        <Separator />
        <MaskGroup>
          <MaskLabel htmlFor="mask"><MaskIcon />Mask:</MaskLabel>
          <MaskSelect id="mask" defaultValue="OFF">
            <option>OFF</option>
            <option>ON</option>
          </MaskSelect>
        </MaskGroup>
        <Separator />
        <ToolButton $w={109}><DepthIcon />D: 0.00000</ToolButton>
        <Separator />
        <ToolButton $w={107}><ScaleIcon />S: 0.45029</ToolButton>
        <Separator />
        <Well />
      </Toolbar>

      <Toolbar>
        <ToolbarCaption>Analyze:</ToolbarCaption>
        {analyzeTools.map(({ key, rest, pre, icon: I, w, pressed }) => (
          <ToolButton key={key + rest} $w={w} $pressed={pressed}>
            <I />
            <span>{pre}<u>{key}</u>{rest}</span>
          </ToolButton>
        ))}
        <Separator />
        <ToolButton $w={90}><CancelIcon />Cancel</ToolButton>
      </Toolbar>

      <Main>
        <SidePanel>
          <TabStrip>
            <SideTab>Set Layer</SideTab>
            <SideTab>Dynamic Mask</SideTab>
            <SideTab>Display Settings</SideTab>
          </TabStrip>
          <ListBox>
            <LayerTable>
              <colgroup>
                <col style={{ width: 39 }} />
                <col style={{ width: 20 }} />
                <col style={{ width: 120 }} />
                <col style={{ width: 20 }} />
                <col style={{ width: 20 }} />
                <col />
              </colgroup>
              <thead>
                <tr>
                  <th>#</th><th>C</th><th>Layer Name</th><th>V</th><th>S</th><th />
                </tr>
              </thead>
              <tbody>
                {layers.map(([n, name]) => (
                  <tr key={n}>
                    <td>{n}</td><td /><td>{name}</td><td>V</td><td>S</td><td />
                  </tr>
                ))}
              </tbody>
            </LayerTable>
          </ListBox>
        </SidePanel>
        <Viewport>
          <ShaftScene />
          <Overlay>
            <OverlayButton aria-label="Swap"><SwapIcon /></OverlayButton>
            <OverlayButton aria-label="Fit view"><FitIcon /></OverlayButton>
            <OverlayButton aria-label="Zoom to window"><ZoomWindowIcon /></OverlayButton>
            <OverlayButton aria-label="Hide"><GlassesIcon /></OverlayButton>
            <OverlayButton aria-label="Views"><ViewIcon /></OverlayButton>
            <OverlayButton $first aria-label="Circle"><CircleIcon /></OverlayButton>
            <OverlayButton $first aria-label="Surface"><CylinderIcon /></OverlayButton>
            <OverlayButton $first aria-label="Solid"><SolidIcon /></OverlayButton>
          </Overlay>
        </Viewport>
      </Main>

      <StatusBar>
        <StatusCell>Licensed to: LND-7330757468@CS</StatusCell>
        <StatusCell $w={230} />
        <StatusCell $w={54} $raised>X, Y, Z:</StatusCell>
        <Coordinates $w={176}>
          4.4878, -0.6480, -0.0000
          <svg width="12" height="18" aria-hidden="true">
            <path d="M0 18L12 6M4 18L12 10M8 18L12 14" stroke="#a0a0a0" />
          </svg>
        </Coordinates>
      </StatusBar>
    </Shell>
  );
}
